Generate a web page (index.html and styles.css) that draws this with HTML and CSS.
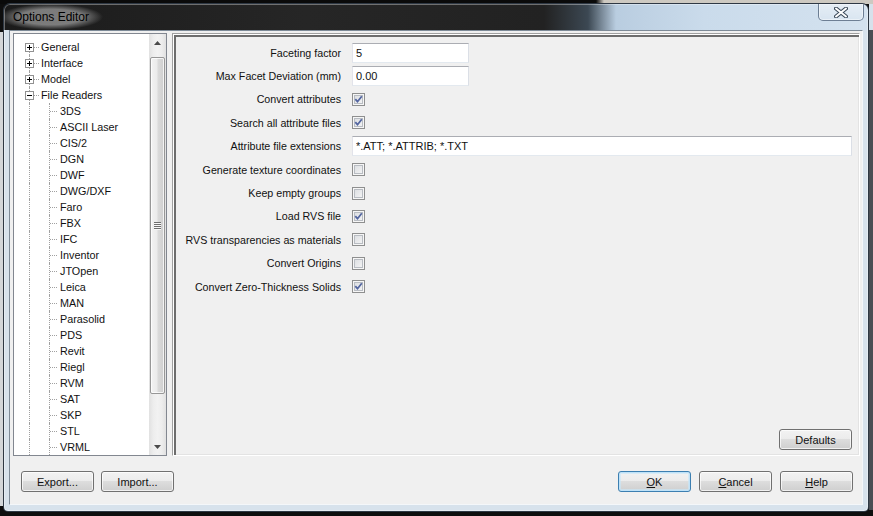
FILE: index.html
```html
<!DOCTYPE html>
<html>
<head>
<meta charset="utf-8">
<title>Options Editor</title>
<link rel="stylesheet" href="styles.css">
</head>
<body>
<div class="window">
  <div class="titlebar">
    <span class="title">Options Editor</span>
    <div class="close">
      <svg width="14" height="11" viewBox="0 0 14 11"><path d="M2 1.5 12 9.5M12 1.5 2 9.5" stroke="#3b4a5a" stroke-width="4" stroke-linecap="round"/><path d="M2 1.5 12 9.5M12 1.5 2 9.5" stroke="#fff" stroke-width="2" stroke-linecap="round"/></svg>
    </div>
  </div>
  <div class="client">
    <div class="main">
      <div class="tree">
        <div class="tree-list">
          <div class="node"><span class="ind root first"><svg class="exp" width="9" height="9" viewBox="0 0 9 9"><rect x=".5" y=".5" width="8" height="8" fill="#fff" stroke="#919191"/><path d="M2 4.5h5M4.5 2v5" stroke="#000"/></svg></span><span class="label">General</span></div>
          <div class="node"><span class="ind root"><svg class="exp" width="9" height="9" viewBox="0 0 9 9"><rect x=".5" y=".5" width="8" height="8" fill="#fff" stroke="#919191"/><path d="M2 4.5h5M4.5 2v5" stroke="#000"/></svg></span><span class="label">Interface</span></div>
          <div class="node"><span class="ind root"><svg class="exp" width="9" height="9" viewBox="0 0 9 9"><rect x=".5" y=".5" width="8" height="8" fill="#fff" stroke="#919191"/><path d="M2 4.5h5M4.5 2v5" stroke="#000"/></svg></span><span class="label">Model</span></div>
          <div class="node"><span class="ind root"><svg class="exp" width="9" height="9" viewBox="0 0 9 9"><rect x=".5" y=".5" width="8" height="8" fill="#fff" stroke="#919191"/><path d="M2 4.5h5" stroke="#000"/></svg></span><span class="label">File Readers</span></div>
          <div class="node"><span class="ind pass"></span><span class="ind child"></span><span class="label">3DS</span></div>
          <div class="node"><span class="ind pass"></span><span class="ind child"></span><span class="label">ASCII Laser</span></div>
          <div class="node"><span class="ind pass"></span><span class="ind child"></span><span class="label">CIS/2</span></div>
          <div class="node"><span class="ind pass"></span><span class="ind child"></span><span class="label">DGN</span></div>
          <div class="node"><span class="ind pass"></span><span class="ind child"></span><span class="label">DWF</span></div>
          <div class="node"><span class="ind pass"></span><span class="ind child"></span><span class="label">DWG/DXF</span></div>
          <div class="node"><span class="ind pass"></span><span class="ind child"></span><span class="label">Faro</span></div>
          <div class="node"><span class="ind pass"></span><span class="ind child"></span><span class="label">FBX</span></div>
          <div class="node"><span class="ind pass"></span><span class="ind child"></span><span class="label">IFC</span></div>
          <div class="node"><span class="ind pass"></span><span class="ind child"></span><span class="label">Inventor</span></div>
          <div class="node"><span class="ind pass"></span><span class="ind child"></span><span class="label">JTOpen</span></div>
          <div class="node"><span class="ind pass"></span><span class="ind child"></span><span class="label">Leica</span></div>
          <div class="node"><span class="ind pass"></span><span class="ind child"></span><span class="label">MAN</span></div>
          <div class="node"><span class="ind pass"></span><span class="ind child"></span><span class="label">Parasolid</span></div>
          <div class="node"><span class="ind pass"></span><span class="ind child"></span><span class="label">PDS</span></div>
          <div class="node"><span class="ind pass"></span><span class="ind child"></span><span class="label">Revit</span></div>
          <div class="node"><span class="ind pass"></span><span class="ind child"></span><span class="label">Riegl</span></div>
          <div class="node"><span class="ind pass"></span><span class="ind child"></span><span class="label">RVM</span></div>
          <div class="node"><span class="ind pass"></span><span class="ind child"></span><span class="label">SAT</span></div>
          <div class="node"><span class="ind pass"></span><span class="ind child"></span><span class="label">SKP</span></div>
          <div class="node"><span class="ind pass"></span><span class="ind child"></span><span class="label">STL</span></div>
          <div class="node"><span class="ind pass"></span><span class="ind child"></span><span class="label">VRML</span></div>
        </div>
        <div class="vscroll">
          <div class="sb-btn"><svg width="7" height="4" viewBox="0 0 7 4"><polygon points="0,4 7,4 3.5,0" fill="#4a4a4a"/></svg></div>
          <div class="sb-track"><div class="sb-thumb"><span class="grip"></span></div></div>
          <div class="sb-btn"><svg width="7" height="4" viewBox="0 0 7 4"><polygon points="0,0 7,0 3.5,4" fill="#4a4a4a"/></svg></div>
        </div>
      </div>
      <div class="panel">
        <div class="form">
          <label class="lbl">Faceting factor</label>
          <div class="ctl"><input class="txt short" type="text" value="5"></div>
          <label class="lbl">Max Facet Deviation (mm)</label>
          <div class="ctl"><input class="txt short" type="text" value="0.00"></div>
          <label class="lbl">Convert attributes</label>
          <div class="ctl"><span class="chk"><svg width="11" height="11" viewBox="1 1 11 11"><path d="M3.3 6.2 5.5 8.7 9.8 3.3" fill="none" stroke="#5466a0" stroke-width="1.8"/></svg></span></div>
          <label class="lbl">Search all attribute files</label>
          <div class="ctl"><span class="chk"><svg width="11" height="11" viewBox="1 1 11 11"><path d="M3.3 6.2 5.5 8.7 9.8 3.3" fill="none" stroke="#5466a0" stroke-width="1.8"/></svg></span></div>
          <label class="lbl">Attribute file extensions</label>
          <div class="ctl"><input class="txt wide" type="text" value="*.ATT; *.ATTRIB; *.TXT"></div>
          <label class="lbl">Generate texture coordinates</label>
          <div class="ctl"><span class="chk"></span></div>
          <label class="lbl">Keep empty groups</label>
          <div class="ctl"><span class="chk"></span></div>
          <label class="lbl">Load RVS file</label>
          <div class="ctl"><span class="chk"><svg width="11" height="11" viewBox="1 1 11 11"><path d="M3.3 6.2 5.5 8.7 9.8 3.3" fill="none" stroke="#5466a0" stroke-width="1.8"/></svg></span></div>
          <label class="lbl">RVS transparencies as materials</label>
          <div class="ctl"><span class="chk"></span></div>
          <label class="lbl">Convert Origins</label>
          <div class="ctl"><span class="chk"></span></div>
          <label class="lbl">Convert Zero-Thickness Solids</label>
          <div class="ctl"><span class="chk"><svg width="11" height="11" viewBox="1 1 11 11"><path d="M3.3 6.2 5.5 8.7 9.8 3.3" fill="none" stroke="#5466a0" stroke-width="1.8"/></svg></span></div>
        </div>
        <div class="panel-foot"><button class="btn">Defaults</button></div>
      </div>
    </div>
    <div class="footer">
      <button class="btn export">Export...</button>
      <button class="btn">Import...</button>
      <span class="spacer"></span>
      <button class="btn default"><u>O</u>K</button>
      <button class="btn"><u>C</u>ancel</button>
      <button class="btn"><u>H</u>elp</button>
    </div>
  </div>
</div>
</body>
</html>
```
FILE: styles.css
```css
html, body { margin: 0; }
body {
  width: 873px;
  height: 516px;
  overflow: hidden;
  box-sizing: border-box;
  padding: 3px 0 0 3px;
  font: 11px "Liberation Sans", Arial, sans-serif;
  color: #111;
  background:
    linear-gradient(90deg, #0a0a0a 0, #0a0a0a 596px, #cdc9c1 604px) 0 0 / 100% 4px no-repeat,
    linear-gradient(#d3d6d9, #d3d6d9) 0 32px / 3px 474px no-repeat,
    linear-gradient(#d6e1eb, #d6e1eb) 869px 0 / 4px 30px no-repeat,
    linear-gradient(#4a4e54, #4a4e54) 869px 30px / 4px 480px no-repeat,
    #0e0e0e;
}

.window {
  width: 866px;
  height: 509px;
  box-sizing: border-box;
  border: 1px solid rgba(28, 38, 50, 0.9);
  border-radius: 7px 7px 5px 5px;
  display: flex;
  flex-direction: column;
  padding: 0 5px 6px;
  overflow: hidden;
  background:
    linear-gradient(90deg, #1b1b1b 0, #262626 300px, #222 540px, #3c4853 584px, #b9cde0 612px, #cadbeb 700px, #d4e2ef 100%) 0 0 / 100% 26px no-repeat,
    #d7e2ec;
  box-shadow: inset 0 0 0 1px rgba(255, 255, 255, 0.35);
}

.titlebar {
  height: 26px;
  flex: none;
  display: flex;
  align-items: flex-start;
  padding-left: 2px;
}
.title {
  font-size: 12px;
  line-height: 26px;
  padding: 0 14px;
  margin-left: -12px;
  color: #000;
  background: radial-gradient(closest-side, rgba(255, 255, 255, 0.42) 60%, rgba(255, 255, 255, 0) 100%);
}
.close {
  margin-left: auto;
  margin-right: -1px;
  margin-top: -1px;
  width: 46px;
  height: 18px;
  box-sizing: border-box;
  border: 1px solid rgba(70, 90, 115, 0.75);
  border-top: none;
  border-radius: 0 0 5px 5px;
  background: linear-gradient(rgba(255, 255, 255, 0.45), rgba(255, 255, 255, 0.15));
  box-shadow: inset 0 0 0 1px rgba(255, 255, 255, 0.45);
  display: flex;
  align-items: center;
  justify-content: center;
}
.close svg { display: block; margin-top: 1px; }

.client {
  flex: 1;
  display: flex;
  flex-direction: column;
  background: #f0f0f0;
  border: 1px solid;
  border-color: #7d8a97 #f4f7fa #f4f7fa #7d8a97;
  padding: 2px 2px 0 3px;
}

.main {
  display: flex;
  gap: 5px;
  height: 423px;
  flex: none;
}

/* tree */
.tree {
  width: 154px;
  box-sizing: border-box;
  border: 1px solid #828790;
  background: #fff;
  display: flex;
}
.tree-list {
  flex: 1;
  padding-top: 5px;
  overflow: hidden;
  font-size: 10.8px;
}
.node {
  height: 16px;
  display: flex;
  align-items: center;
  white-space: nowrap;
}
.ind {
  position: relative;
  flex: none;
  height: 16px;
}
.ind.root, .ind.pass { width: 26px; }
.ind.child { width: 19px; }
.ind.root::before, .ind.pass::before {
  content: "";
  position: absolute;
  left: 15px;
  top: 0;
  bottom: 0;
  border-left: 1px dotted #a0a0a0;
}
.ind.root.first::before { top: 8px; }
.ind.root::after {
  content: "";
  position: absolute;
  left: 16px;
  top: 8px;
  width: 9px;
  border-top: 1px dotted #a0a0a0;
}
.ind.child::before {
  content: "";
  position: absolute;
  left: 9px;
  top: 0;
  bottom: 0;
  border-left: 1px dotted #a0a0a0;
}
.ind.child::after {
  content: "";
  position: absolute;
  left: 10px;
  top: 8px;
  width: 7px;
  border-top: 1px dotted #a0a0a0;
}
.exp {
  position: absolute;
  left: 11px;
  top: 4px;
  z-index: 1;
  display: block;
}
.label {
  padding: 0 1px;
  line-height: 16px;
}

/* scrollbar */
.vscroll {
  width: 17px;
  flex: none;
  display: flex;
  flex-direction: column;
  background: linear-gradient(90deg, #e1e1e1, #ededed 25%, #f2f2f2 50%, #ededed 75%, #e1e1e1);
}
.sb-btn {
  height: 17px;
  flex: none;
  display: flex;
  align-items: center;
  justify-content: center;
}
.sb-btn svg { display: block; }
.sb-track {
  flex: 1;
  padding: 6px 1px 0 1px;
}
.sb-thumb {
  height: 337px;
  box-sizing: border-box;
  border: 1px solid #979797;
  border-radius: 2px;
  background: linear-gradient(90deg, #f3f3f3, #ebebeb 45%, #dadada 55%, #cfcfcf);
  box-shadow: inset 0 0 0 1px rgba(255, 255, 255, 0.75);
  display: flex;
  align-items: center;
  justify-content: center;
}
.grip {
  width: 7px;
  height: 8px;
  background: repeating-linear-gradient(#6f6f6f 0 1px, #f8f8f8 1px 2px);
}

/* right panel */
.panel {
  width: 688px;
  box-sizing: border-box;
  border: 1px solid;
  border-color: #a0a0a0 #ffffff #ffffff #a0a0a0;
  box-shadow: inset 1px 1px 0 #ffffff, inset 3px 3px 0 #6d6d6d, inset -1px -1px 0 #e3e3e3;
  display: flex;
  flex-direction: column;
}
.form {
  display: grid;
  grid-template-columns: 168px 1fr;
  grid-auto-rows: 23.4px;
  column-gap: 11px;
  align-items: center;
  padding: 7px 7px 0 0;
}
.lbl {
  text-align: right;
  white-space: nowrap;
  font-size: 10.7px;
}
.ctl {
  display: flex;
  align-items: center;
}
.txt {
  height: 20px;
  box-sizing: border-box;
  border: 1px solid;
  border-color: #abadb3 #dbdfe6 #e3e9ef #e2e3ea;
  background: #fff;
  padding: 0 3px;
  margin: 0;
  font: 11px "Liberation Sans", Arial, sans-serif;
  color: #111;
  outline: none;
}
.txt.short { width: 117px; }
.txt.wide { width: 100%; }
.chk {
  width: 13px;
  height: 13px;
  box-sizing: border-box;
  border: 1px solid #8e8f8f;
  background: linear-gradient(135deg, #d7dade, #f8f8f8);
  box-shadow: inset 0 0 0 1px #f6f6f6, inset 0 0 0 2px #b8bcc2;
  display: block;
}
.chk svg { display: block; }
.panel-foot {
  margin-top: auto;
  display: flex;
  justify-content: flex-end;
  padding: 0 7px 5px 0;
}

/* buttons */
.btn {
  width: 73px;
  height: 21px;
  box-sizing: border-box;
  padding: 0;
  margin: 0;
  border: 1px solid #707070;
  border-radius: 3px;
  background: linear-gradient(#f2f2f2 0, #ebebeb 50%, #dddddd 50%, #cfcfcf 100%);
  box-shadow: inset 0 0 0 1px rgba(255, 255, 255, 0.7);
  font: 11px "Liberation Sans", Arial, sans-serif;
  color: #111;
  flex: none;
}
.btn.default {
  border-color: #3c7fb1;
  box-shadow: inset 0 0 0 1px #bfe2f8, inset 0 0 0 2px rgba(200, 232, 250, 0.6);
}
.btn u { text-decoration: underline; }

.footer {
  flex: 1;
  display: flex;
  align-items: flex-start;
  gap: 8px;
  padding: 15px 7px 0 8px;
}
.footer .export { margin-right: -1px; }
.spacer { flex: 1; }
```
